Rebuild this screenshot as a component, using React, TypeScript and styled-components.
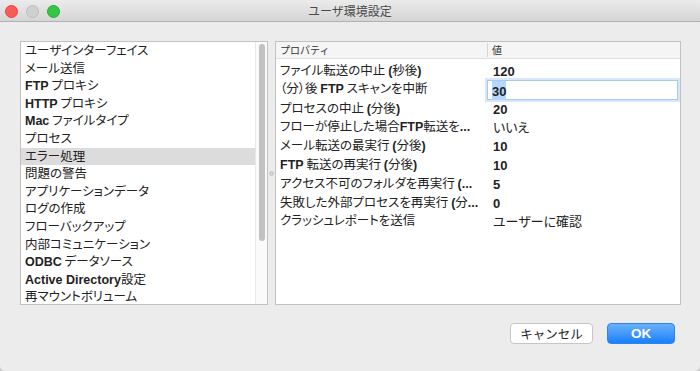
import React from "react";
import styled, { createGlobalStyle } from "styled-components";

const GlobalStyle = createGlobalStyle`
  html, body {
    margin: 0;
    padding: 0;
    background: #c9c9c9;
  }
  body {
    font-family: "Noto Sans CJK JP", "Liberation Sans", sans-serif;
    color: #222;
  }
`;

const Window = styled.div`
  width: 700px;
  height: 371px;
  background: #ececec;
  border-radius: 0 0 5px 5px;
  display: flex;
  flex-direction: column;
  overflow: hidden;
`;

const TitleBar = styled.div`
  position: relative;
  height: 21px;
  flex: none;
  background: linear-gradient(#ebebeb, #d5d5d5);
  border-bottom: 1px solid #b1b1b1;
  display: flex;
  align-items: center;
  justify-content: center;
`;

const Lights = styled.div`
  position: absolute;
  left: 5px;
  top: 5px;
  display: flex;
  gap: 8px;
`;

const Light = styled.span<{ $c: string; $b: string }>`
  width: 11px;
  height: 11px;
  border-radius: 50%;
  background: ${(p) => p.$c};
  border: 0.5px solid ${(p) => p.$b};
`;

const Title = styled.div`
  font-size: 12px;
  color: #4a4a4a;
`;

const Content = styled.div`
  display: flex;
  padding: 19px 19px 0 20px;
  height: 264px;
`;

const ListPanel = styled.div`
  width: 248px;
  flex: none;
  background: #fff;
  border: 1px solid #c2c2c2;
  box-sizing: border-box;
  display: flex;
  overflow: hidden;
`;

const List = styled.div`
  flex: 1;
  display: flex;
  flex-direction: column;
`;

const ListItem = styled.div<{ $sel?: boolean }>`
  height: 17.6px;
  line-height: 16.6px;
  box-sizing: border-box;
  padding: 0 0 1px 4px;
  font-size: 12.5px;
  font-feature-settings: "palt";
  white-space: nowrap;
  background: ${(p) => (p.$sel ? "#dcdcdc" : "transparent")};
`;

const Track = styled.div`
  width: 12px;
  flex: none;
  background: #fafafa;
  border-left: 1px solid #e8e8e8;
  padding: 2px 2px 0 3px;
  box-sizing: border-box;
`;

const Thumb = styled.div`
  height: 197px;
  border-radius: 4px;
  background: #c1c1c1;
`;

const Splitter = styled.div`
  width: 7px;
  flex: none;
  display: flex;
  align-items: center;
  justify-content: center;
  &::after {
    content: "";
    width: 5px;
    height: 5px;
    border-radius: 50%;
    background: #d4d4d4;
    border: 1px solid #c4c4c4;
    box-sizing: border-box;
  }
`;

const TablePanel = styled.div`
  flex: 1;
  background: #fff;
  border: 1px solid #c2c2c2;
  box-sizing: border-box;
  display: flex;
  flex-direction: column;
`;

const HeaderRow = styled.div`
  height: 16px;
  flex: none;
  display: grid;
  grid-template-columns: 211px 1fr;
  background: #f5f5f5;
  border-bottom: 1px solid #e0e0e0;
  font-size: 10px;
  color: #333;
`;

const HeaderCell = styled.div<{ $sep?: boolean }>`
  padding-left: 4px;
  line-height: 14px;
  border-left: ${(p) => (p.$sep ? "1px solid #d6d6d6" : "none")};
  margin: 1px 0;
`;

const Row = styled.div`
  height: 18.8px;
  box-sizing: border-box;
  padding-bottom: 2px;
  display: grid;
  grid-template-columns: 211px 1fr;
  align-items: center;
  font-size: 12.5px;
  font-feature-settings: "palt";
  white-space: nowrap;
`;

const PropCell = styled.div`
  padding-left: 4px;
  overflow: hidden;
`;

const ValueCell = styled.div`
  padding: 2px 0 0 6px;
  font-size: 13px;
`;

const EditBox = styled.div`
  height: 20px;
  margin: 2px 2px -2px 0;
  padding: 1px 0 0 4px;
  font-size: 13px;
  line-height: 17px;
  background: #fff;
  border: 1px solid #a9c8ef;
  box-shadow: 0 0 0 2px #d7e6fb;
  box-sizing: border-box;
`;

const Selected = styled.span`
  background: #b3d7ff;
`;

const Lat = styled.b`
  font-family: "Liberation Sans", sans-serif;
  font-weight: 700;
`;

const Footer = styled.div`
  display: flex;
  justify-content: flex-end;
  gap: 14px;
  padding: 18px 25px 0 0;
`;

const Button = styled.button<{ $primary?: boolean }>`
  height: 21px;
  width: ${(p) => (p.$primary ? "68px" : "83px")};
  border-radius: 4px;
  font-family: ${(p) =>
    p.$primary ? `"Liberation Sans", sans-serif` : `"Noto Sans CJK JP", sans-serif`};
  font-size: ${(p) => (p.$primary ? "13.5px" : "12.5px")};
  font-weight: ${(p) => (p.$primary ? 700 : 400)};
  color: ${(p) => (p.$primary ? "#fff" : "#222")};
  background: ${(p) =>
    p.$primary ? "linear-gradient(#69b1fa, #1a7ffb)" : "#fff"};
  border: 1px solid ${(p) => (p.$primary ? "#2b83f4" : "#c6c6c6")};
  padding: 0;
  line-height: 19px;
`;

const listItems: React.ReactNode[] = [
  "ユーザインターフェイス",
  "メール送信",
  <><Lat>FTP</Lat> プロキシ</>,
  <><Lat>HTTP</Lat> プロキシ</>,
  <><Lat>Mac</Lat> ファイルタイプ</>,
  "プロセス",
  "エラー処理",
  "問題の警告",
  "アプリケーションデータ",
  "ログの作成",
  "フローバックアップ",
  "内部コミュニケーション",
  <><Lat>ODBC</Lat> データソース</>,
  <><Lat>Active Directory</Lat>設定</>,
  "再マウントボリューム",
];

const rows: { prop: React.ReactNode; value: React.ReactNode; edit?: boolean }[] = [
  { prop: <>ファイル転送の中止 <Lat>(</Lat>秒後<Lat>)</Lat></>, value: <Lat>120</Lat> },
  { prop: <>（分）後 <Lat>FTP</Lat> スキャンを中断</>, value: <Selected><Lat>30</Lat></Selected>, edit: true },
  { prop: <>プロセスの中止 <Lat>(</Lat>分後<Lat>)</Lat></>, value: <Lat>20</Lat> },
  { prop: <>フローが停止した場合<Lat>FTP</Lat>転送を<Lat>...</Lat></>, value: "いいえ" },
  { prop: <>メール転送の最実行 <Lat>(</Lat>分後<Lat>)</Lat></>, value: <Lat>10</Lat> },
  { prop: <><Lat>FTP</Lat> 転送の再実行 <Lat>(</Lat>分後<Lat>)</Lat></>, value: <Lat>10</Lat> },
  { prop: <>アクセス不可のフォルダを再実行 <Lat>(...</Lat></>, value: <Lat>5</Lat> },
  { prop: <>失敗した外部プロセスを再実行 <Lat>(</Lat>分<Lat>...</Lat></>, value: <Lat>0</Lat> },
  { prop: "クラッシュレポートを送信", value: "ユーザーに確認" },
];

export default function App() {
  return (
    <Window>
      <GlobalStyle />
      <TitleBar>
        <Lights>
          <Light $c="#fc5b57" $b="#de4542" />
          <Light $c="#d0d0d0" $b="#bcbcbc" />
          <Light $c="#35c648" $b="#27aa35" />
        </Lights>
        <Title>ユーザ環境設定</Title>
      </TitleBar>
      <Content>
        <ListPanel>
          <List>
            {listItems.map((item, i) => (
              <ListItem key={i} $sel={i === 6}>
                {item}
              </ListItem>
            ))}
          </List>
          <Track>
            <Thumb />
          </Track>
        </ListPanel>
        <Splitter />
        <TablePanel>
          <HeaderRow>
            <HeaderCell>プロパティ</HeaderCell>
            <HeaderCell $sep>値</HeaderCell>
          </HeaderRow>
          {rows.map((r, i) => (
            <Row key={i}>
              <PropCell>{r.prop}</PropCell>
              {r.edit ? (
                <EditBox>{r.value}</EditBox>
              ) : (
                <ValueCell>{r.value}</ValueCell>
              )}
            </Row>
          ))}
        </TablePanel>
      </Content>
      <Footer>
        <Button>キャンセル</Button>
        <Button $primary>OK</Button>
      </Footer>
    </Window>
  );
}
